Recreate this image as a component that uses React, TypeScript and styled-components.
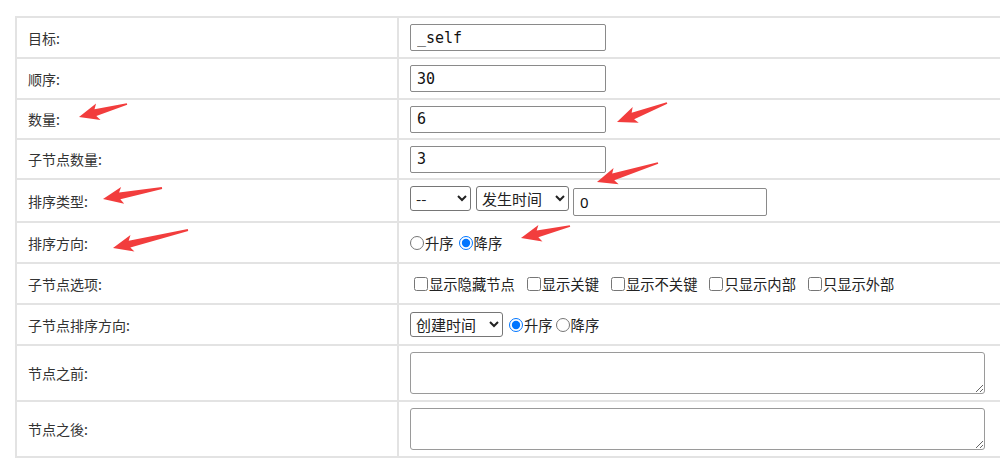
import React from "react";
import styled, { createGlobalStyle } from "styled-components";

const GlobalStyle = createGlobalStyle`
  body {
    margin: 0;
    background: #fff;
    overflow: hidden;
    font-family: "Noto Sans CJK SC", "Noto Sans", sans-serif;
  }
`;

const Page = styled.div`
  position: relative;
  width: 1000px;
  height: 467px;
  padding: 16px 0 0 15px;
  box-sizing: border-box;
`;

const Table = styled.div`
  width: 1000px;
  border-top: 2px solid #e3e3e3;
  border-left: 2px solid #e3e3e3;
`;

const Row = styled.div<{ $h: number }>`
  display: grid;
  grid-template-columns: 382px 1fr;
  height: ${(p) => p.$h}px;
  box-sizing: border-box;
  border-bottom: 2px solid #e3e3e3;
`;

const Label = styled.div`
  display: flex;
  align-items: center;
  padding-left: 11px;
  border-right: 2px solid #e3e3e3;
  font-size: 14px;
  color: #333;
`;

const Value = styled.div`
  display: flex;
  align-items: center;
  padding-left: 11px;
  font-size: 14.3px;
  color: #222;
`;

const Group = styled.div<{ $gap?: number; $pad?: number }>`
  display: flex;
  align-items: center;
  gap: ${(p) => p.$gap ?? 4}px;
  padding-left: ${(p) => p.$pad ?? 0}px;
`;

const TopGroup = styled.div`
  display: flex;
  align-items: flex-start;
`;

const TextInput = styled.input<{ $mono?: boolean; $w: number; $h?: number; $top?: number }>`
  box-sizing: border-box;
  width: ${(p) => p.$w}px;
  height: ${(p) => p.$h ?? 27}px;
  margin: ${(p) => p.$top ?? 0}px 0 0 0;
  padding: 1px 6px;
  border: 1px solid #8a8a8a;
  border-radius: 2px;
  background: #fff;
  color: #111;
  font-family: ${(p) =>
    p.$mono ? '"DejaVu Sans Mono", "Liberation Mono", monospace' : '"Noto Sans", "Noto Sans CJK SC", sans-serif'};
  font-size: 15px;
  outline: none;
`;

const Select = styled.select<{ $w: number; $mr?: number }>`
  box-sizing: border-box;
  width: ${(p) => p.$w}px;
  height: 25px;
  margin: 0 ${(p) => p.$mr ?? 0}px 0 0;
  padding: 0 1px;
  border: 1px solid #767676;
  border-radius: 3px;
  background: #fff;
  color: #222;
  font-family: "Noto Sans CJK SC", "Noto Sans", sans-serif;
  font-size: 15px;
`;

const Choice = styled.label<{ $gap?: number }>`
  display: inline-flex;
  align-items: center;
  gap: ${(p) => p.$gap ?? 2}px;
  white-space: nowrap;
`;

const Radio = styled.input`
  width: 14px;
  height: 14px;
  margin: 0;
  accent-color: #0075ff;
`;

const Check = styled.input`
  width: 14px;
  height: 14px;
  margin: 0;
`;

const TextArea = styled.textarea`
  box-sizing: border-box;
  width: 575px;
  height: 42px;
  margin: 0;
  border: 1px solid #9a9a9a;
  border-radius: 3px;
  resize: both;
  font-family: "Noto Sans", sans-serif;
`;

const Overlay = styled.svg`
  position: absolute;
  left: 0;
  top: 0;
  pointer-events: none;
`;

type ArrowDef = { tip: [number, number]; tail: [number, number] };

const arrows: ArrowDef[] = [
  { tip: [79, 117], tail: [127, 104] },
  { tip: [617, 122], tail: [667, 103] },
  { tip: [103, 199], tail: [162, 188] },
  { tip: [597, 182], tail: [658, 163] },
  { tip: [113, 248], tail: [188, 230] },
  { tip: [521, 238], tail: [570, 226] },
];

function Arrow({ tip, tail }: ArrowDef) {
  const dx = tail[0] - tip[0];
  const dy = tail[1] - tip[1];
  const len = Math.sqrt(dx * dx + dy * dy);
  const angle = (Math.atan2(dy, dx) * 180) / Math.PI;
  const h = 20;
  const w = 8.5;
  const s = 3.5;
  const pts = `0,0 ${h},${-w} ${h - 3},${-s} ${len},-0.9 ${len},0.9 ${h - 3},${s} ${h},${w}`;
  return (
    <polygon
      points={pts}
      fill="#f23d3d"
      transform={`translate(${tip[0]} ${tip[1]}) rotate(${angle})`}
    />
  );
}

const options = ["显示隐藏节点", "显示关键", "显示不关键", "只显示内部", "只显示外部"];

export default function App() {
  return (
    <Page>
      <GlobalStyle />
      <Table>
        <Row $h={41}>
          <Label>目标:</Label>
          <Value>
            <TextInput $mono $w={196} defaultValue="_self" />
          </Value>
        </Row>
        <Row $h={41}>
          <Label>顺序:</Label>
          <Value>
            <TextInput $mono $w={196} defaultValue="30" />
          </Value>
        </Row>
        <Row $h={40}>
          <Label>数量:</Label>
          <Value>
            <TextInput $mono $w={196} defaultValue="6" />
          </Value>
        </Row>
        <Row $h={40}>
          <Label>子节点数量:</Label>
          <Value>
            <TextInput $mono $w={196} defaultValue="3" />
          </Value>
        </Row>
        <Row $h={43}>
          <Label>排序类型:</Label>
          <Value>
            <TopGroup>
              <Select $w={61} $mr={5} defaultValue="--">
                <option>--</option>
              </Select>
              <Select $w={93} $mr={4} defaultValue="发生时间">
                <option>发生时间</option>
                <option>创建时间</option>
              </Select>
              <TextInput $w={194} $h={28} $top={2} defaultValue="0" />
            </TopGroup>
          </Value>
        </Row>
        <Row $h={41}>
          <Label>排序方向:</Label>
          <Value>
            <Group $gap={5}>
              <Choice $gap={1}>
                <Radio type="radio" name="dir" />
                升序
              </Choice>
              <Choice $gap={1}>
                <Radio type="radio" name="dir" defaultChecked />
                降序
              </Choice>
            </Group>
          </Value>
        </Row>
        <Row $h={41}>
          <Label>子节点选项:</Label>
          <Value>
            <Group $gap={12} $pad={4}>
              {options.map((o) => (
                <Choice key={o} $gap={1}>
                  <Check type="checkbox" />
                  {o}
                </Choice>
              ))}
            </Group>
          </Value>
        </Row>
        <Row $h={41}>
          <Label>子节点排序方向:</Label>
          <Value>
            <Group $gap={3}>
              <Select $w={93} $mr={3} defaultValue="创建时间">
                <option>创建时间</option>
                <option>发生时间</option>
              </Select>
              <Choice $gap={1}>
                <Radio type="radio" name="cdir" defaultChecked />
                升序
              </Choice>
              <Choice $gap={1}>
                <Radio type="radio" name="cdir" />
                降序
              </Choice>
            </Group>
          </Value>
        </Row>
        <Row $h={56}>
          <Label>节点之前:</Label>
          <Value>
            <TextArea />
          </Value>
        </Row>
        <Row $h={56}>
          <Label>节点之後:</Label>
          <Value>
            <TextArea />
          </Value>
        </Row>
      </Table>
      <Overlay width={1000} height={467}>
        {arrows.map((a, i) => (
          <Arrow key={i} {...a} />
        ))}
      </Overlay>
    </Page>
  );
}
